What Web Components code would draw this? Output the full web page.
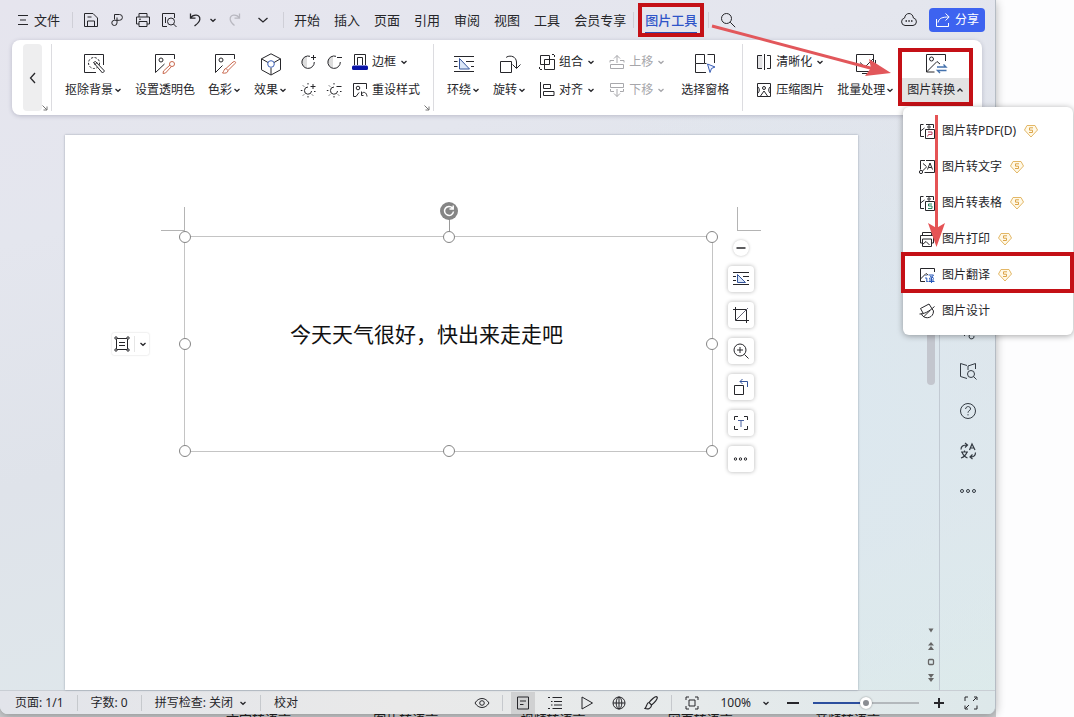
<!DOCTYPE html>
<html lang="zh-CN">
<head>
<meta charset="utf-8">
<meta name="viewport" content="width=device-width, initial-scale=1">
<title>文字编辑器 - 图片工具</title>
<style>
  html, body { margin: 0; min-height: 100vh; }
  body {
    position: relative;
    background: #fdfdfe;
    color: #26262a;
    font: 12px/16px "Noto Sans", "Noto Sans CJK SC", sans-serif;
    overflow: hidden;
  }
</style>
</head>
<body>
<desktop-view></desktop-view>

<script>
const ICONS = {
  menu: [12, 12, '<path d="M1 1.500h10M3 6h6M1 10.500h10"/>'],
  down: [8, 8, '<path d="M1.500 3l2.500 2.300L6.500 3" stroke-width="1.300"/>'],
  up: [8, 8, '<path d="M1.500 5.500L4 3l2.500 2.500" stroke-width="1.300"/>'],
  wide: [20, 10, '<path d="M5.500 3l4.500 4 4.500-4" stroke-width="1.300"/>'],
  left: [10, 14, '<path d="M7 2L2.500 7 7 12" stroke-width="1.300"/>'],
  corner: [6, 6, '<path d="M.5.5L5 5M5 1.500V5H1.500" stroke="#777"/>'],
  save: [16, 16, '<path d="M1.500 14.500v-13h8.500l4.500 4.500v8.500zM4.500 14.500V9h7v5.500M4.500 5h4"/>'],
  link: [16, 16, '<path d="M5.500 7.500V2.500h5a2.900 2.900 0 0 1 0 5.800H5.300a2.600 2.600 0 1 0 2.700 2.600V5.500"/>'],
  print: [16, 16, '<path d="M4 5V1.500h8V5M4 12H1.500V5h13v7H12M4 9.500h8v5H4zM4 7.200h2"/>'],
  preview: [16, 16, '<path d="M6 14.500H1.500v-13h12V6M4.500 5v6"/><circle cx="10" cy="9.500" r="3.500"/><path d="M12.500 12l3 3"/>'],
  undo: [16, 16, '<path d="M3.500 1.500v4.700h5M3.500 6.200C6 1.800 13.500 2 12.800 7.500c-.4 3-2.800 4.500-5.300 6.500" stroke-width="1.300"/>'],
  redo: [16, 16, '<path d="M12.500 1.500v4.700h-5M12.500 6.200C10 1.800 2.500 2 3.200 7.500c.4 3 2.300 4.500 4.300 6" stroke="#b8b8c0" stroke-width="1.300"/>'],
  search: [16, 16, '<circle cx="6.500" cy="6.500" r="5"/><path d="M10.200 10.200l5 5"/>'],
  cloud: [16, 16, '<path d="M4 13.500a3.800 3.800 0 0 1-.4-7.500C4.300 0 11.700 0 12.400 6a3.800 3.800 0 0 1-.4 7.500z"/><path d="M4.500 9H6M7.300 9h1.500M10 9h1.500" stroke-width="1.400"/>'],
  share: [16, 16, '<path d="M1.500 7v7.500h12V11M3 10.500c1-4.500 4.500-5.500 11-5.500M10.500 1.500L14.200 5l-3.700 3.500"/>'],
  cutout: [22, 22, '<path d="M20.500 12V1.500h-19v18H13"/><circle cx="11" cy="10" r="5.500" stroke-dasharray="2.200 1.500"/><path d="M10.500 9.500l2-1 9 9.500-2 2z" fill="#fff"/><path d="M14 9.500l-2.500 2.500"/>'],
  picker: [22, 22, '<path d="M20.500 6V1.500h-19V19.500l9-8.500"/><circle cx="7" cy="7" r="2"/><g stroke="#c9684e"><circle cx="18" cy="11" r="2.500"/><path d="M16 12l-6.500 6-.5 2.500 2.500-.5 6-6.500"/></g>'],
  color: [22, 22, '<path d="M20.500 6V1.500h-19V19.500l7-7"/><circle cx="7" cy="7" r="2"/><path d="M20.500 8.500c1 0 1.500 1 .5 2l-7 7-2-2 7-6.500zM12 15.500c-2 0-2 3-3.500 4.500 2.500.5 5.500 0 5.500-2.500" stroke="#c9684e"/>'],
  cube: [22, 22, '<path d="M11 .8l9.500 5v11L11 22l-9.500-5.200v-11zM1.500 5.800L8 9.500M20.500 5.800L14 9.500M11 15v6.500"/><circle cx="11" cy="11" r="3.300" stroke="#3b5fb5"/>'],
  contrastUp: [16, 16, '<path d="M7 2.500v11a5.500 5.500 0 0 1 0-11z" fill="#ddd" stroke="none"/><path d="M10 2.300a6.200 6.200 0 1 0 4.300 5.700M11 3.500h5M13.500 1v5"/>'],
  contrastDown: [16, 16, '<path d="M7 2.500v11a5.500 5.500 0 0 1 0-11z" fill="#ddd" stroke="none"/><path d="M10 2.300a6.200 6.200 0 1 0 4.300 5.700M11 3.500h5"/>'],
  brightUp: [16, 16, '<path d="M8 5a3.600 3.600 0 1 0 3.600 4M8 1v1.500M8 14v1.500M.8 8.500h1.600M3 3.500l1 1M3 13.500l1-1M13 13.500l-1-1M14 9.500h1.500M10.500 4.500h5M13 2v5"/>'],
  brightDown: [16, 16, '<path d="M8 5a3.600 3.600 0 1 0 3.600 4M8 1v1.500M8 14v1.500M.8 8.500h1.600M3 3.500l1 1M3 13.500l1-1M13 13.500l-1-1M14 9.500h1.500M10.500 4.500h5"/>'],
  border: [16, 16, '<path d="M2.500 11V.5h11V11M5.500 11V3.500h5V11"/><rect y="11.500" width="16" height="4.500" rx="1.500" fill="#0a14a8" stroke="none"/>'],
  reset: [16, 16, '<path d="M14.500 7V1.500h-13v13H4l3-4"/><circle cx="6" cy="6" r="1.800"/><path d="M9.500 9.500v4h2M9.500 13c0-3.500 5-4 5.500 1.500"/>'],
  wrap: [22, 22, '<path d="M1 3.500h20M1 8.500h3.500M13 8.500h8M1 13.500h3.500M18 13.500h3M1 18.500h20"/><path d="M6.500 5.500v10.500h10z" stroke="#33549b" fill="#dbe7f8"/>'],
  rotate: [22, 22, '<path d="M1.500 8.500h11v11h-11zM7.500 4.500V4C12 2 17 3.500 17.500 9v6M13.500 11.500l4 4 4-4"/>'],
  group: [16, 16, '<path d="M1.500 1.500h9v9h-9zM5.500 5.500h10v10h-10z"/><path d="M.5 13v2.500H3M13 .5h2.500V3" stroke-dasharray="2 1"/>'],
  align: [16, 16, '<path d="M1.500 0v16M4.500 2.500h7v4h-7zM4.500 9.500h10.500v4H4.500z"/>'],
  raise: [16, 16, '<g stroke="#a8a8ac"><path d="M1 8.500V6.500h4M11 6.500h4v2M8 9V1.500M5 4.500l3-3 3 3M1.500 10.500h13M1.500 14.500h13M1.500 10.500v4M14.500 10.500v4"/></g>'],
  lower: [16, 16, '<g stroke="#a8a8ac"><path d="M1.500 1.500h13v4h-13zM1.500 7v2.500H5M14.500 7v2.500H11M8 7v7.500M5 11.500l3 3 3-3"/></g>'],
  pane: [22, 22, '<path d="M1.500 1.500h9v9h-9zM1.500 10.500v9h10.500M13.500 1.500h7V10M10.500 10.500h2"/><path d="M13.500 11l7.500 3-3.500 1.500-1.500 4z" stroke="#3b5fb5" fill="#eef3ff"/>'],
  sharpen: [16, 16, '<path d="M6 1.500H1.500v13H6" /><path d="M2 2h4.500v12H2z" fill="#e2e2e4" stroke="none"/><path d="M8.500 0v16M11 1.500h3.500v13H11"/>'],
  compress: [16, 16, '<path d="M1.500 1.500h13v13h-13zM1 4c3 2 3 6 0 8M15 4c-3 2-3 6 0 8M4.500 14l3.500-5 3.500 5"/><circle cx="8" cy="6" r="1.500"/>'],
  batch: [22, 22, '<path d="M1.500 1.500h17v17h-17zM20.500 7v13.500H7M5 9.500l5 4.500 8-8"/>'],
  convert: [22, 22, '<path d="M20.500 8V1.500h-19v17.500L12 8.500l3 2.500M1.500 19h8"/><circle cx="6.500" cy="6" r="2"/><path d="M12 14h9l-2.500-2.500M21.500 17.500h-9l2.500 2.500" stroke="#4472ad" stroke-width="1.400"/>'],
  pdf: [16, 16, '<path d="M5 13.500H1.500v-12h3M7 1.500h7.500V5M1.500 8l4-3"/><circle cx="10" cy="4" r="1.200"/><path d="M6.500 6.500h9v9h-9z"/><path d="M8.500 13.500l1-2h3.500v-2.500H9" stroke="#b84060"/>'],
  ocr: [16, 16, '<path d="M1.500 10.500v-9h4.500M7 1.500h8.500v12h-10"/><circle cx="2" cy="13" r="1.600"/><path d="M3.500 12l4-4M4 4.500l3.500 3M8.500 10.500L11 4l2.500 6.500M9.500 8.500h3"/>'],
  sheet: [16, 16, '<path d="M5 13.500H1.500v-12h3M7 1.500h7.500V5M1.500 8l4-3"/><circle cx="10" cy="4" r="1.200"/><path d="M6.500 6.500h9v9h-9z"/><path d="M13 9H9.500v2H13v2.500H9" stroke="#28835f"/>'],
  printPicture: [16, 16, '<path d="M3.500 4.500v-3h9v3M3.500 12H1.500V4.500h13V12h-2M3.500 8h9v7.500h-9zM4 13l3-2.500 3.500 3.500"/>'],
  translate: [16, 16, '<path d="M15.500 5V1.500h-14v13H6M1.500 12l5.500-5.500 2 1.500"/><path d="M6.500 8l1 1M6 11h1.800v4l1-1M9.500 8h5c-1 2-2.500 3-4.500 3.500M11 9l4 2.500M12.500 11v5M10 13h5M9.500 14.500h6" stroke="#2757b8"/>'],
  design: [16, 16, '<path d="M1.500 5.500L10 1l4.500 7M1.500 5.500L4 10M.5 11c4.500 0 9-2 15-7.500M2.500 10.500c1 6 12 6 12-2.500M4.500 14L11 7.500"/>'],
  coin: [14, 14, '<path d="M3 1.500h8l2.500 4.500L7 13 .5 6z" stroke="#e3b766" fill="#fff9e8" stroke-linejoin="round"/><path d="M9 3.800H5.500v2.400h3v2.300H5" stroke="#dda549"/>'],
  minus: [10, 10, '<path d="M.5 5h9" stroke-width="1.500"/>'],
  wrapSmall: [16, 16, '<path d="M0 1.500h16M0 5.500h3M10 5.500h6M0 9.500h3M14 9.500h2M0 13.500h16"/><path d="M4.500 3.500v8h8z" stroke="#33549b" fill="#dbe7f8"/>'],
  crop: [16, 16, '<path d="M2.500 0v13.500H16M0 2.500h13.500V16"/><path d="M3 13L15 1" stroke="#667"/>'],
  zoomIn: [16, 16, '<circle cx="7" cy="7" r="6"/><path d="M11.500 11.500l4 4M4 7h6M7 4v6"/>'],
  turn: [16, 16, '<path d="M1.500 6.500h9v9h-9z"/><path d="M14.500 8V2.500H7M9.500 0L7 2.500 9.500 5" stroke="#33549b"/>'],
  extract: [16, 16, '<path d="M1.500 5V1.500H5M11 1.500h3.500V5M14.500 11v3.500H11M5 14.500H1.500V11"/><path d="M5 5.500h6M8 5.500V12" stroke="#4a62a0"/>'],
  more: [16, 8, '<circle cx="2.500" cy="4" r="1.200"/><circle cx="7.500" cy="4" r="1.200"/><circle cx="12.500" cy="4" r="1.200"/>'],
  paragraph: [16, 16, '<path d="M2.500 2.500h11v11h-11zM5 6.500h6M5 9.500h6"/><g fill="#fff"><circle cx="2" cy="2" r="1.200"/><circle cx="14" cy="2" r="1.200"/><circle cx="2" cy="14" r="1.200"/><circle cx="14" cy="14" r="1.200"/></g>'],
  respin: [18, 18, '<circle cx="9" cy="9" r="9" fill="#858585" stroke="none"/><path d="M12.500 6A4.500 4.500 0 1 0 13.500 9.500M13.200 3.500V7H9.500" stroke="#fff" stroke-width="1.500"/>'],
  clipped: [18, 18, '<path d="M3 11l3 3M12 12a2.500 2.500 0 1 0 3 2"/>'],
  book: [18, 18, '<path d="M8 3.500L1.500 1.500v13L8 16.500M9 4l7.500-2.500V7M9 4v4"/><circle cx="12" cy="12" r="3.500"/><path d="M14.500 14.500l3 3"/>'],
  help: [18, 18, '<circle cx="9" cy="9" r="7.500"/><path d="M6.500 7c.5-3.500 5.500-3 5 .2-.3 1.500-2.500 1.500-2.500 3.500M9 12.200v1.200"/>'],
  swap: [18, 18, '<path d="M2 7.500C2 4 4 3 8 3M6 1l2.500 2L6 5.500M10.500 8L13 2l3 6M11.500 6h3.500M2 10h7M5.500 8.500V10M3 10c1 3 3 5 5.500 6M8 10c-1 3-3 5-6 6M16.500 10.500c0 3.500-1.500 4.500-5 4.500M13.500 12.500L11 15l2.500 2" stroke-width="1.200"/>'],
  dots: [18, 18, '<circle cx="3" cy="9" r="1.500"/><circle cx="9" cy="9" r="1.500"/><circle cx="15" cy="9" r="1.500"/>'],
  lineDown: [8, 8, '<path d="M1.500 2.500h5L4 6.500z" fill="#666" stroke="none"/>'],
  pageUp: [8, 8, '<path d="M4 0l3 3.500H1zM4 4l3 4H1z" fill="#666" stroke="none"/>'],
  browse: [8, 8, '<rect x="1.500" y="1.500" width="5" height="5" rx="1" stroke="#666" stroke-width="1.300"/>'],
  pageDown: [8, 8, '<path d="M4 4L1 0h6zM4 8L1 4h6z" fill="#666" stroke="none"/>'],
  eye: [16, 16, '<path d="M1 8c3.500-6 10.500-6 14 0-3.500 6-10.500 6-14 0z"/><circle cx="8" cy="8" r="2.300"/>'],
  pageView: [14, 14, '<path d="M1.500 1h11v12h-11zM4 5h6M4 8.500h3.500"/>'],
  outline: [14, 14, '<path d="M0 1.500h2M4.500 1.500H14M3 5.500h1.500M6 5.500h8M3 9h1.500M6 9h8M0 12.500h2M4.500 12.500H14"/>'],
  play: [14, 14, '<path d="M2 1l10.500 6L2 13z"/>'],
  globe: [14, 14, '<circle cx="7" cy="7" r="6"/><ellipse cx="7" cy="7" rx="2.800" ry="6"/><path d="M1 7h12M7 1v12"/>'],
  brush: [14, 14, '<path d="M13 1c1.500 1.500-3 6-5.500 8L5 6.500C7 4 11.500-.500 13 1zM5 6.500c-2.500 0-2 4-4 6 3 1 6.500 0 6.500-3.500" stroke-width="1.200"/>'],
  fit: [14, 14, '<path d="M1 4V1h3M10 1h3v3M13 10v3h-3M4 13H1v-3M4 4h6v6H4z"/>'],
  zoomOut: [12, 12, '<path d="M0 6h12" stroke-width="2"/>'],
  zoomMore: [10, 10, '<path d="M0 5h10M5 0v10" stroke-width="2"/>'],
  full: [14, 14, '<path d="M1 5V1h3M10 1h3v3M13 9.500V13h-3M4 13H1V9.500M12.500 1.500L9 5M1.500 12.500L5 9"/>']
};

/* Registers an element whose open shadow root is filled by render(host). */
function element(name, styles, render) {
  customElements.define(name, class extends HTMLElement {
    connectedCallback() {
      if (this.shadowRoot) return;
      const root = this.attachShadow({ mode: 'open' });
      root.innerHTML = `<style>
        *, ::before, ::after { box-sizing: border-box; }
        button { display: flex; flex: none; align-items: center; margin: 0; padding: 0; border: 0;
          background: none; color: inherit; font: inherit; white-space: nowrap; cursor: pointer; }
        ${styles}</style>${render(this)}`;
    }
  });
}
const icon = name => `<ui-icon name="${name}"></ui-icon>`;

element('ui-icon', `:host { display: block; flex: none; } svg { display: block; overflow: visible; }`, host => {
  const [w, h, body] = ICONS[host.getAttribute('name')];
  return `<svg width="${w}" height="${h}" viewBox="0 0 ${w} ${h}" fill="none" stroke="currentColor" aria-hidden="true">${body}</svg>`;
});

element('bar-line', `:host { display: block; flex: none; width: 1px; height: 16px; background: #cfcfd7; }`, () => '');

element('red-frame', `:host { position: absolute; border: 4px solid #c41016; pointer-events: none; }`, () => '');

element('menu-tab', `
  :host { display: block; flex: none; position: relative; font-size: 13px; line-height: 20px; }
  button.on { color: #2f55c8; font-weight: 500; }
  button.on::after { content: ""; position: absolute; left: 0; right: 0; bottom: -4px; height: 2px; background: #2f4fb4; }
  red-frame { inset: -7px; }`,
  host => host.hasAttribute('active')
    ? `<button class="on" aria-current="true"><slot></slot></button><red-frame></red-frame>`
    : `<button><slot></slot></button>`);

element('menu-bar', `
  :host { display: flex; align-items: center; height: 40px; padding: 0 10px 0 17px; gap: 10px; }
  .file { gap: 5px; padding-right: 2px; font-size: 13px; line-height: 20px; }
  .undo { gap: 6px; }
  nav { display: flex; align-items: center; gap: 14px; }
  .tool { display: flex; align-items: center; gap: 11px; margin-left: -3px; }
  .end { display: flex; align-items: center; gap: 12px; margin-left: auto; }
  .share { height: 24px; width: 56px; justify-content: center; gap: 4px; border-radius: 4px; background: #3d63f0; color: #fff; }`,
  () => `
  <button class="file">${icon('menu')}文件</button>
  <bar-line></bar-line>
  <button aria-label="保存">${icon('save')}</button>
  <button aria-label="输出">${icon('link')}</button>
  <button aria-label="打印">${icon('print')}</button>
  <button aria-label="打印预览">${icon('preview')}</button>
  <button class="undo" aria-label="撤销">${icon('undo')}${icon('down')}</button>
  <button aria-label="恢复">${icon('redo')}</button>
  <button aria-label="更多">${icon('wide')}</button>
  <bar-line></bar-line>
  <nav>${['开始','插入','页面','引用','审阅','视图','工具','会员专享'].map(t => `<menu-tab>${t}</menu-tab>`).join('')}</nav>
  <div class="tool"><bar-line></bar-line><menu-tab active>图片工具</menu-tab><bar-line></bar-line>
  <button aria-label="搜索">${icon('search')}</button></div>
  <div class="end"><button aria-label="云同步">${icon('cloud')}</button>
  <button class="share">${icon('share')}分享</button></div>`);

/* Large ribbon command: icon over a caption. */
element('ribbon-button', `
  :host { display: block; flex: none; position: relative; }
  button { flex-direction: column; gap: 3px; }
  .label { display: flex; align-items: center; gap: 1px; height: 24px; }
  :host([open]) { margin-left: -5px; }
  :host([open]) .label { padding: 0 5px; background: #e3e3e3; }
  red-frame { inset: -5px -4px -4px -4px; }`,
  host => `<button>${icon(host.getAttribute('icon'))}<span class="label"><slot></slot>${host.hasAttribute('menu') ? icon(host.hasAttribute('open') ? 'up' : 'down') : ''}</span></button>
  ${host.hasAttribute('open') ? '<red-frame></red-frame>' : ''}`);

/* Small ribbon command: icon beside its caption. */
element('ribbon-item', `
  :host { display: block; }
  button { gap: 4px; height: 16px; }
  .label { display: flex; align-items: center; gap: 4px; }
  :host([disabled]) { color: #a6a6aa; }`,
  host => `<button ${host.hasAttribute('disabled') ? 'disabled' : ''} aria-label="${host.getAttribute('label') || host.textContent}">${icon(host.getAttribute('icon'))}${host.textContent ? `<span class="label"><slot></slot>${host.hasAttribute('menu') ? icon('down') : ''}</span>` : ''}</button>`);

element('ribbon-divider', `
  :host { display: flex; align-items: flex-end; gap: 3px; flex: none; align-self: stretch; }
  i { width: 1px; align-self: stretch; background: #dcdce0; }`,
  host => `${host.hasAttribute('corner') ? icon('corner') : ''}<i></i>`);

element('ribbon-bar', `
  :host { display: flex; align-items: center; height: 75px; margin: 0 13px 0 12px; padding: 4px 11px; border-radius: 8px;
    background: #fff; box-shadow: 0 1px 4px rgba(60,60,90,.25); }
  .back { width: 19px; align-self: stretch; justify-content: center; border-radius: 4px; background: #eeeeef; }
  .group { display: flex; flex: none; align-items: center; gap: 13px; padding: 0 13px; }
  .tight { padding-right: 4px; }
  .stack { display: flex; flex-direction: column; gap: 12px; padding-bottom: 3px; }
  .cols { display: flex; gap: 10px; }
  .arrange { gap: 14px; padding-right: 3px; }`,
  () => `
  <button class="back" aria-label="向左滚动">${icon('left')}</button>
  <ribbon-divider corner></ribbon-divider>
  <div class="group tight">
    <ribbon-button icon="cutout" menu>抠除背景</ribbon-button>
    <ribbon-button icon="picker">设置透明色</ribbon-button>
    <ribbon-button icon="color" menu>色彩</ribbon-button>
    <ribbon-button icon="cube" menu>效果</ribbon-button>
    <div class="cols">
      <div class="stack"><ribbon-item icon="contrastUp" label="增加对比度"></ribbon-item><ribbon-item icon="brightUp" label="增加亮度"></ribbon-item></div>
      <div class="stack"><ribbon-item icon="contrastDown" label="降低对比度"></ribbon-item><ribbon-item icon="brightDown" label="降低亮度"></ribbon-item></div>
      <div class="stack"><ribbon-item icon="border" menu>边框</ribbon-item><ribbon-item icon="reset">重设样式</ribbon-item></div>
    </div>
  </div>
  <ribbon-divider corner></ribbon-divider>
  <div class="group">
    <ribbon-button icon="wrap" menu>环绕</ribbon-button>
    <ribbon-button icon="rotate" menu>旋转</ribbon-button>
    <div class="cols arrange">
      <div class="stack"><ribbon-item icon="group" menu>组合</ribbon-item><ribbon-item icon="align" menu>对齐</ribbon-item></div>
      <div class="stack"><ribbon-item icon="raise" menu disabled>上移</ribbon-item><ribbon-item icon="lower" menu disabled>下移</ribbon-item></div>
    </div>
    <ribbon-button icon="pane">选择窗格</ribbon-button>
  </div>
  <ribbon-divider></ribbon-divider>
  <div class="group">
    <div class="stack"><ribbon-item icon="sharpen" menu>清晰化</ribbon-item><ribbon-item icon="compress">压缩图片</ribbon-item></div>
    <ribbon-button icon="batch" menu>批量处理</ribbon-button>
    <ribbon-button icon="convert" menu open>图片转换</ribbon-button>
  </div>`);

element('float-tools', `
  :host { display: flex; flex-direction: column; align-items: center; gap: 10px; width: 26px; }
  button { justify-content: center; width: 26px; height: 26px; border-radius: 4px; background: #fff; box-shadow: 0 0 4px rgba(0,0,0,.3); }
  .fold { width: 16px; height: 16px; border-radius: 8px; box-shadow: 0 0 3px rgba(0,0,0,.25); }`,
  () => `<button class="fold" aria-label="收起">${icon('minus')}</button>` +
    [['wrapSmall','布局选项'],['crop','裁剪'],['zoomIn','放大'],['turn','旋转'],['extract','提取文字'],['more','更多']]
      .map(([i, l]) => `<button aria-label="${l}">${icon(i)}</button>`).join(''));

/* The selected picture with its eight handles. */
element('picture-frame', `
  :host { display: flex; align-items: center; position: relative; min-height: 216px; box-sizing: border-box; padding: 0 0 20px 105px; border: 1px solid #c4c4c4; }
  p { margin: 0; font-size: 21px; line-height: 28px; color: #111; white-space: nowrap; }
  i { position: absolute; width: 12px; height: 12px; margin: -6px; border: 1px solid #858585; border-radius: 50%; background: #fff; }
  .n { top: 0; } .m { top: 50%; } .s { top: 100%; }
  .w { left: 0; } .c { left: 50%; } .e { left: 100%; }
  .stem { position: absolute; left: 50%; top: -18px; width: 1px; height: 14px; background: #999; }
  .spin { position: absolute; left: 50%; top: -35px; margin-left: -9px; }
  .mark { position: absolute; top: -30px; width: 24px; height: 24px; border-bottom: 1px solid #b4b4b4; }
  .mark.l { left: -24px; border-right: 1px solid #b4b4b4; }
  .mark.r { left: calc(100% + 25px); border-left: 1px solid #b4b4b4; }
  float-tools { position: absolute; left: calc(100% + 16px); top: 3px; }`,
  () => `<p><slot></slot></p>
  <span class="mark l"></span><span class="mark r"></span><span class="stem"></span>
  ${['n w','n c','n e','m w','m e','s w','s c','s e'].map(c => `<i class="${c}"></i>`).join('')}
  <button class="spin" aria-label="旋转图片">${icon('respin')}</button>
  <float-tools></float-tools>`);

element('document-page', `
  :host { display: block; position: relative; flex: 1; padding: 101px 145px 0 119px; background: #fff; box-shadow: 0 0 2px rgba(80,90,110,.5); }
  .tag { position: absolute; left: 47px; top: 198px; gap: 4px; height: 22px; width: 37px; justify-content: center; border-radius: 2px; box-shadow: 0 0 2px rgba(0,0,0,.2); }
  .tag bar-line { background: #e6e6e6; }`,
  () => `<slot></slot><button class="tag" aria-label="段落布局">${icon('paragraph')}<bar-line></bar-line>${icon('down')}</button>`);

element('scroll-gutter', `
  :host { display: flex; flex-direction: column; align-items: center; justify-content: space-between; width: 16px; padding-bottom: 8px; }
  .thumb { width: 8px; height: 270px; border-radius: 4px; background: #c3c6ce; }
  .nav { display: flex; flex-direction: column; gap: 8px; }`,
  () => `<div class="thumb"></div><div class="nav">
    <button aria-label="向下">${icon('lineDown')}</button><button aria-label="上一页">${icon('pageUp')}</button>
    <button aria-label="选择浏览对象">${icon('browse')}</button><button aria-label="下一页">${icon('pageDown')}</button></div>`);

element('side-rail', `
  :host { display: flex; flex-direction: column; align-items: center; gap: 22px; width: 56px; padding-top: 207px; border-left: 1px solid #c2cad3; color: #333a42; }`,
  () => [['clipped','工具'],['book','查找'],['help','帮助'],['swap','翻译'],['dots','更多']].map(([i, l]) => `<button aria-label="${l}">${icon(i)}</button>`).join(''));

element('work-space', `
  :host { display: flex; flex: 1; min-height: 0; }
  main { display: flex; flex: 1; min-width: 0; padding: 20px 65px 0; }`,
  () => `<main><document-page><picture-frame>今天天气很好，快出来走走吧</picture-frame></document-page></main>
  <scroll-gutter></scroll-gutter><side-rail></side-rail>`);

element('zoom-slider', `
  :host { display: flex; align-items: center; }
  input { -webkit-appearance: none; appearance: none; margin: 0; width: 106px; height: 12px; background: linear-gradient(90deg, #2c4f9e 50%, #b3b8bc 50%) center / 100% 2px no-repeat; }
  input::-webkit-slider-thumb { -webkit-appearance: none; width: 12px; height: 12px; border: 3px solid #fff; border-radius: 50%; background: #8a8d92; box-shadow: 0 0 2px rgba(0,0,0,.4); }`,
  () => `<input type="range" min="0" max="200" value="100" aria-label="显示比例">`);

element('status-bar', `
  :host { display: flex; align-items: center; gap: 13px; height: 24px; padding: 0 12px 0 15px; border-top: 1px solid #c9ced4;
    background: linear-gradient(90deg, #e2e4ea, #e9e9e9 40%, #e6eaeb 70%, #dde8ea); }
  .spell { gap: 6px; }
  .end { display: flex; align-items: center; gap: 8px; margin-left: auto; }
  .end > button { width: 24px; height: 22px; justify-content: center; }
  .end > .on { background: #d0d1d2; }
  .end > .level { width: auto; gap: 11px; margin: 0 3px 0 8px; }
  bar-line { background: #c6c9cd; }`,
  () => {
    const b = (i, l, c = '') => `<button class="${c}" aria-label="${l}">${icon(i)}</button>`;
    return `<button>页面: 1/1</button><bar-line></bar-line><button>字数: 0</button><bar-line></bar-line>
    <button class="spell">拼写检查: 关闭 ${icon('down')}</button><bar-line></bar-line><button>校对</button>
    <div class="end">${b('eye', '护眼模式')}<bar-line></bar-line>${b('pageView', '页面视图', 'on')}${b('outline', '大纲')}${b('play', '阅读')}${b('globe', 'Web 版式')}${b('brush', '写作模式')}<bar-line></bar-line>
    ${b('fit', '最佳显示比例')}<button class="level">100%${icon('down')}</button>${b('zoomOut', '缩小')}<zoom-slider></zoom-slider>${b('zoomMore', '放大')}${b('full', '全屏')}</div>`;
  });

element('app-window', `
  :host { display: flex; flex-direction: column; position: relative; overflow: hidden; border-right: 1px solid #b5bcc4; border-radius: 0 0 8px 8px; box-shadow: 0 2px 10px rgba(0,0,0,.3);
    background: radial-gradient(circle at 82% 60%, #dce8ef 0, transparent 40%), linear-gradient(165deg, #e6e5ee 0, #e4e6ee 25%, #dfe3ea 50%, #dfe7eb 75%, #dcebea 100%); }`,
  () => `<menu-bar></menu-bar><ribbon-bar></ribbon-bar><work-space></work-space><status-bar></status-bar>`);

element('convert-item', `
  :host { display: block; position: relative; }
  button { width: 100%; height: 36px; padding-left: 16px; }
  .text { margin: 0 8px 0 7px; }
  red-frame { inset: -5px -1px 0 -2px; }`,
  host => `<button role="menuitem">${icon(host.getAttribute('icon'))}<span class="text"><slot></slot></span>${host.hasAttribute('paid') ? icon('coin') : ''}</button>
  ${host.hasAttribute('marked') ? '<red-frame></red-frame>' : ''}`);

element('convert-menu', `
  :host { display: block; width: 170px; padding: 6px 0; border-radius: 6px; background: #fff; box-shadow: 0 1px 6px rgba(0,0,0,.35); }`,
  () => `<div role="menu">
    <convert-item icon="pdf" paid>图片转PDF(D)</convert-item>
    <convert-item icon="ocr" paid>图片转文字</convert-item>
    <convert-item icon="sheet" paid>图片转表格</convert-item>
    <convert-item icon="printPicture" paid>图片打印</convert-item>
    <convert-item icon="translate" paid marked>图片翻译</convert-item>
    <convert-item icon="design">图片设计</convert-item></div>`);

element('guide-arrows', `
  :host { position: absolute; left: 0; top: 0; pointer-events: none; }
  svg { display: block; }`,
  () => `<svg width="1000" height="260" viewBox="0 0 1000 260" aria-hidden="true">
    <path d="M712 26L874 69" stroke="#e2575b" stroke-width="3"/><path d="M891 73L865 76 871 68 869 59z" fill="#e2575b"/>
    <path d="M936.500 115V230" stroke="#e55355" stroke-width="3"/><path d="M936.500 247L928 223l8.500 5 8.500-5z" fill="#e55355"/></svg>`);

/* Captions of the window behind, seen only below the editor's lower edge. */
element('back-captions', `
  :host { display: flex; justify-content: space-between; position: absolute; left: 226px; right: 194px; top: calc(100% - 6px); font-size: 13px; line-height: 16px; color: #222; }`,
  () => ['文字转语言', '图片转语言', '视频转语言', '网页转语言', '音频转语言'].map(t => `<span>${t}</span>`).join(''));

element('desktop-view', `
  :host { display: grid; grid-template-columns: minmax(0, 1fr) 78px; position: relative; min-height: 100vh; overflow: hidden; }
  .behind { position: absolute; left: 0; bottom: 0; width: calc(100% - 78px); height: 12px; background: #cdcfd1; }
  app-window { margin-bottom: 3px; z-index: 1; }
  convert-menu { position: absolute; right: 1px; top: 107px; z-index: 2; }
  guide-arrows { z-index: 3; }`,
  () => `<div class="behind"></div><back-captions></back-captions><app-window></app-window>
  <convert-menu></convert-menu><guide-arrows></guide-arrows>`);
</script>
</body>
</html>
